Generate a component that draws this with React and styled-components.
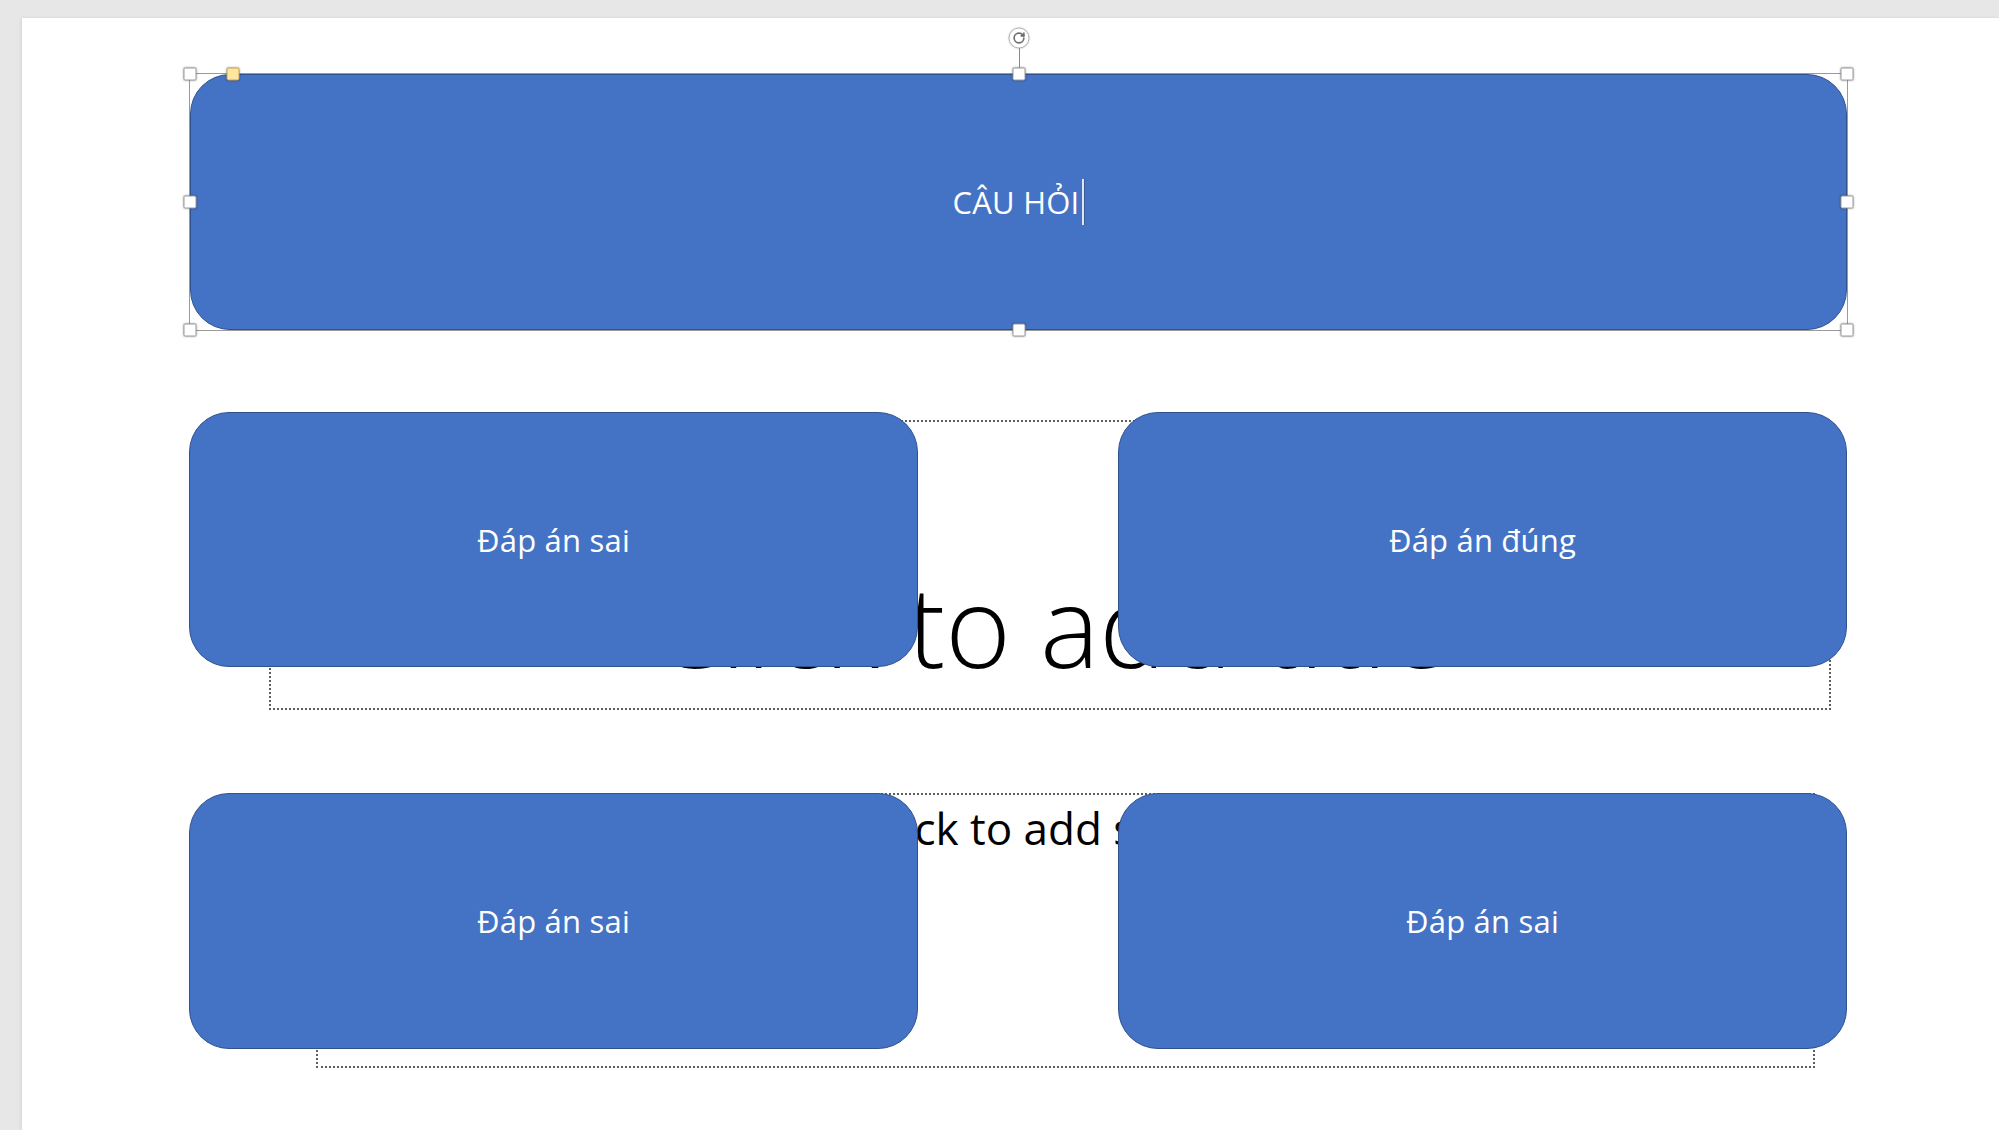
import React from 'react'
import styled, { createGlobalStyle } from 'styled-components'
import { RotateCw } from 'lucide-react'

const GlobalStyle = createGlobalStyle`
  html, body {
    margin: 0;
    padding: 0;
    background: #e7e7e7;
    overflow: hidden;
  }
  * { box-sizing: border-box; }
`

const Workspace = styled.div`
  width: 1999px;
  height: 1130px;
  padding: 18px 0 0 22px;
  background: #e7e7e7;
`

const Slide = styled.div`
  position: relative;
  width: 100%;
  height: 1112px;
  background: #fff;
  box-shadow: -1px 0 3px rgba(0, 0, 0, 0.08);
  padding-top: 402px;
  font-family: "Open Sans", "Noto Sans", sans-serif;
`

const Placeholder = styled.div`
  display: flex;
  justify-content: center;
  align-items: ${p => (p.bottom ? 'flex-end' : 'flex-start')};
  margin-left: ${p => p.left}px;
  margin-top: ${p => p.top || 0}px;
  width: ${p => p.w}px;
  height: ${p => p.h}px;
  border: 2px dotted rgba(40, 40, 40, 0.75);
  padding: ${p => p.pad};
  color: #000;
  font-size: ${p => p.size}px;
  font-weight: ${p => p.weight || 400};
  line-height: 1;
  white-space: nowrap;
  overflow: hidden;
`

const ShapesLayer = styled.div`
  position: absolute;
  inset: 0;
  padding: 55px 0 0 167px;
  display: flex;
  flex-direction: column;
`

const QuestionFrame = styled.div`
  position: relative;
  width: 1659px;
  height: 258px;
  border: 1px solid #9a9a9a;
`

const Shape = styled.div`
  display: flex;
  align-items: center;
  justify-content: center;
  width: 100%;
  height: ${p => p.h || 255}px;
  background: #4472c4;
  border: 1.5px solid #2f528f;
  border-radius: 40px;
  color: #fff;
  font-size: 31px;
  letter-spacing: 0.2px;
`

const Caret = styled.span`
  display: inline-block;
  width: 2px;
  height: 46px;
  margin-left: 3px;
  background: #dfe6f3;
  box-shadow: 1px 0 0 #3b5c97;
`

const Handle = styled.span`
  position: absolute;
  width: 13px;
  height: 13px;
  background: ${p => (p.adjust ? '#fde7a0' : '#fff')};
  border: 1px solid ${p => (p.adjust ? '#c9a24a' : '#9b9b9b')};
  border-radius: 2px;
  box-shadow: 0 0 2px rgba(0, 0, 0, 0.25);
  left: ${p => p.x};
  top: ${p => p.y};
  transform: translate(-50%, -50%);
`

const RotateStem = styled.span`
  position: absolute;
  left: 50%;
  top: -26px;
  width: 1px;
  height: 26px;
  background: #8a8a8a;
`

const RotateKnob = styled.span`
  position: absolute;
  left: 50%;
  top: -36px;
  width: 21px;
  height: 21px;
  transform: translate(-50%, -50%);
  border-radius: 50%;
  background: #fff;
  border: 1px solid #b5b5b5;
  box-shadow: 0 0 2px rgba(0, 0, 0, 0.2);
  display: flex;
  align-items: center;
  justify-content: center;
  color: #6d6d6d;
`

const AnswerGrid = styled.div`
  display: grid;
  grid-template-columns: 729px 729px;
  column-gap: 200px;
  row-gap: 126px;
  margin-top: 81px;
  width: 1658px;
`

const handles = [
  ['0%', '0%'], ['50%', '0%'], ['100%', '0%'],
  ['0%', '50%'], ['100%', '50%'],
  ['0%', '100%'], ['50%', '100%'], ['100%', '100%'],
]

const answers = ['Đáp án sai', 'Đáp án đúng', 'Đáp án sai', 'Đáp án sai']

export default function App() {
  return (
    <>
      <GlobalStyle />
      <Workspace>
        <Slide>
          <Placeholder bottom left={247} w={1562} h={290} size={112} weight={300} pad="0 0 27px 0">
            Click to add title
          </Placeholder>
          <Placeholder left={294} top={83} w={1499} h={275} size={44} pad="11px 0 0 0">
            Click to add subtitle
          </Placeholder>

          <ShapesLayer>
            <QuestionFrame>
              <Shape h={256}>
                CÂU HỎI<Caret />
              </Shape>
              <RotateStem />
              <RotateKnob>
                <RotateCw size={13} strokeWidth={3} />
              </RotateKnob>
              {handles.map(([x, y], i) => (
                <Handle key={i} x={x} y={y} />
              ))}
              <Handle adjust x="43px" y="0%" />
            </QuestionFrame>

            <AnswerGrid>
              {answers.map((a, i) => (
                <Shape key={i} h={i < 2 ? 255 : 256}>{a}</Shape>
              ))}
            </AnswerGrid>
          </ShapesLayer>
        </Slide>
      </Workspace>
    </>
  )
}
